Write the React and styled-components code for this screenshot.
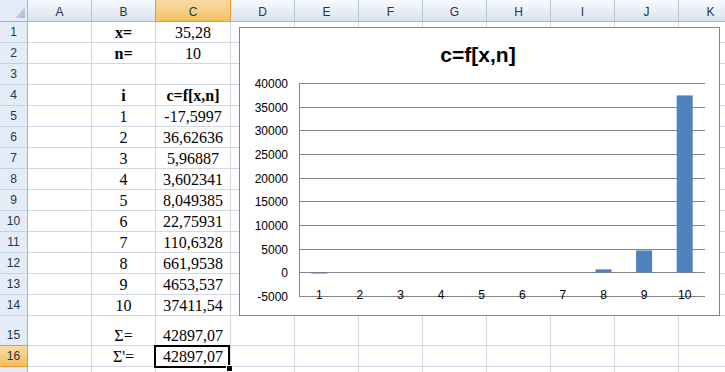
import React from "react";
import styled, { createGlobalStyle, css } from "styled-components";

const Global = createGlobalStyle`
  html, body { margin: 0; padding: 0; background: #fff; }
  body { font-family: "Liberation Sans", Arial, sans-serif; }
`;

const Sheet = styled.div`
  position: relative;
  width: 725px;
  height: 372px;
  overflow: hidden;
  display: grid;
  grid-template-columns: 28px 64px 64px 75px repeat(8, 64px);
  grid-template-rows: 22px repeat(14, 21px) 30px 21px 21px;
  background: #fff;
`;

const headText = css`
  font-family: "Liberation Sans", Arial, sans-serif;
  font-size: 12px;
  color: #23354d;
  box-sizing: border-box;
  display: flex;
  justify-content: center;
`;

const Corner = styled.div`
  position: relative;
  box-sizing: border-box;
  background: #e4ecf7;
  border-right: 1px solid #9eb6ce;
  border-bottom: 1px solid #9eb6ce;
  &::after {
    content: "";
    position: absolute;
    left: 15px;
    top: 7px;
    width: 10px;
    height: 11px;
    background: linear-gradient(135deg, #d6e0ec, #a9bcd3);
    clip-path: polygon(100% 0, 100% 100%, 0 100%);
  }
`;

const ColHead = styled.div`
  ${headText};
  align-items: center;
  padding-top: 3px;
  background: linear-gradient(180deg, #f7fafd 0%, #e7edf6 55%, #d9e2ef 100%);
  border-right: 1px solid #b3c4d8;
  border-bottom: 1px solid #9eb6ce;
  ${(p) =>
    p.$sel &&
    css`
      background: linear-gradient(180deg, #f9dba3 0%, #f6cf86 55%, #f1c05c 100%);
      border-right-color: #f29436;
      border-bottom-color: #f29436;
      box-shadow: -1px 0 0 #f29436;
    `}
`;

const RowHead = styled.div`
  ${headText};
  align-items: center;
  background: #e4ecf7;
  border-right: 1px solid #9eb6ce;
  border-bottom: 1px solid #c3d1e1;
  ${(p) =>
    p.$sel &&
    css`
      background: linear-gradient(180deg, #f9dba3 0%, #f1c05c 100%);
      border-right-color: #f29436;
      border-bottom-color: #f29436;
      box-shadow: 0 -1px 0 #f29436;
    `}
  ${(p) =>
    p.$tall &&
    css`
      align-items: flex-end;
      padding-bottom: 3px;
    `}
`;

const Cell = styled.div`
  position: relative;
  box-sizing: border-box;
  border-right: 1px solid #d0d7e5;
  border-bottom: 1px solid #d0d7e5;
  display: flex;
  align-items: flex-end;
  justify-content: center;
  font-family: "Liberation Serif", "Times New Roman", serif;
  font-size: 16px;
  color: #000;
  white-space: nowrap;
  font-weight: ${(p) => (p.$bold ? 700 : 400)};
  ${(p) =>
    p.$sel &&
    css`
      z-index: 3;
      &::after {
        content: "";
        position: absolute;
        left: -2px;
        top: -1px;
        right: 0;
        bottom: -2px;
        border: 2px solid #000;
      }
      &::before {
        content: "";
        position: absolute;
        right: -2px;
        top: 20px;
        width: 5px;
        height: 5px;
        background: #000;
        box-shadow: 0 0 0 1px #fff;
        z-index: 4;
      }
    `}
`;

const ChartBox = styled.div`
  position: absolute;
  left: 239px;
  top: 27px;
  width: 481px;
  height: 289px;
  box-sizing: border-box;
  border: 1px solid #868686;
  background: #fff;
  z-index: 2;
`;

const Plot = styled.svg`
  display: block;
  font-family: "Liberation Sans", Arial, sans-serif;
`;

const cols = ["A", "B", "C", "D", "E", "F", "G", "H", "I", "J", "K"];

const values = [
  -17.5997, 36.62636, 5.96887, 3.602341, 8.049385, 22.75931, 110.6328,
  661.9538, 4653.537, 37411.54,
];
const valueText = [
  "-17,5997", "36,62636", "5,96887", "3,602341", "8,049385", "22,75931",
  "110,6328", "661,9538", "4653,537", "37411,54",
];

const content = {
  1: { B: ["x=", true], C: ["35,28"] },
  2: { B: ["n=", true], C: ["10"] },
  4: { B: ["i", true], C: ["c=f[x,n]", true] },
  15: { B: ["Σ="], C: ["42897,07"] },
  16: { B: ["Σ'="], C: ["42897,07"] },
};
valueText.forEach((t, i) => {
  content[i + 5] = { B: [String(i + 1)], C: [t] };
});

function Chart() {
  const left = 59;
  const right = 465;
  const top = 55;
  const step = 23.667;
  const ticks = [];
  for (let k = 0; k <= 9; k++) ticks.push(40000 - k * 5000);
  const yOf = (v) => top + ((40000 - v) / 5000) * step;
  const zeroY = Math.round(yOf(0)) + 0.5;
  const catW = (right - left) / 10;
  return (
    <ChartBox>
      <Plot width="479" height="287" viewBox="0 0 479 287">
        <text x="238" y="34" textAnchor="middle" fontSize="21" fontWeight="700" fill="#000">
          c=f[x,n]
        </text>
        {ticks.map((t) => {
          const y = Math.round(yOf(t)) + 0.5;
          return (
            <g key={t}>
              <line x1={left} x2={right} y1={y} y2={y} stroke="#868686" strokeWidth="1" />
              <text x="48" y={y + 4.2} textAnchor="end" fontSize="12" fill="#000">
                {t}
              </text>
            </g>
          );
        })}
        <line x1={left + 0.5} x2={left + 0.5} y1={Math.round(yOf(40000)) + 0.5} y2={Math.round(yOf(-5000)) + 0.5} stroke="#868686" strokeWidth="1" />
        {values.map((v, i) => {
          const cx = left + catW * (i + 0.5);
          if (v < 0) {
            return <rect key={i} x={cx - 8} y={zeroY} width="16" height="1.2" fill="#4f81bd" opacity="0.8" />;
          }
          const h = (v / 5000) * step;
          if (h < 1) return null;
          return <rect key={i} x={cx - 8} y={zeroY - h} width="16" height={h} fill="#4f81bd" />;
        })}
        {values.map((_, i) => (
          <text key={i} x={left + catW * (i + 0.5)} y="270.5" textAnchor="middle" fontSize="12" fill="#000">
            {i + 1}
          </text>
        ))}
      </Plot>
    </ChartBox>
  );
}

export default function App() {
  const rows = [];
  for (let r = 1; r <= 17; r++) rows.push(r);
  return (
    <>
      <Global />
      <Sheet>
        <Corner />
        {cols.map((c) => (
          <ColHead key={c} $sel={c === "C"}>
            {c}
          </ColHead>
        ))}
        {rows.map((r) => (
          <React.Fragment key={r}>
            <RowHead $sel={r === 16} $tall={r === 15}>
              {r <= 16 ? r : ""}
            </RowHead>
            {cols.map((c) => {
              const d = content[r] && content[r][c];
              return (
                <Cell key={c} $bold={d && d[1]} $sel={r === 16 && c === "C"}>
                  {d ? d[0] : ""}
                </Cell>
              );
            })}
          </React.Fragment>
        ))}
        <Chart />
      </Sheet>
    </>
  );
}
